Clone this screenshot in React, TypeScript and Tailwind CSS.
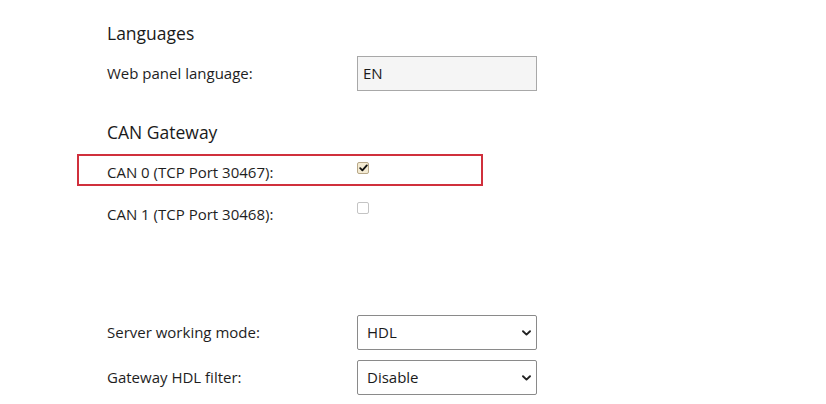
import React from "react";

const font = { fontFamily: '"Open Sans", "Noto Sans", sans-serif' };

function Chevron() {
  return (
    <svg width="9" height="6" viewBox="0 0 9 6" className="absolute right-[5px] top-1/2 -translate-y-1/2">
      <path d="M1 1.2 L4.5 4.6 L8 1.2" fill="none" stroke="#222" strokeWidth="1.9" strokeLinecap="round" strokeLinejoin="round" />
    </svg>
  );
}

function SelectBox({ value }: { value: string }) {
  return (
    <div className="relative w-[180px] h-[35px] border border-[#8a8a8a] rounded-[2px] bg-white flex items-center pl-[9px] text-[15px] text-[#1a1a1a]">
      {value}
      <Chevron />
    </div>
  );
}

function Checkbox({ checked }: { checked: boolean }) {
  return checked ? (
    <span className="block w-[12px] h-[12px] rounded-[2px] border border-[#b8a888] bg-[#f4ebd3] flex items-center justify-center">
      <svg width="9" height="8" viewBox="0 0 9 8">
        <path d="M1.2 4.2 L3.4 6.4 L7.8 1.4" fill="none" stroke="#111" strokeWidth="1.8" strokeLinecap="round" strokeLinejoin="round" />
      </svg>
    </span>
  ) : (
    <span className="block w-[12px] h-[12px] rounded-[2px] border border-[#c4c4c4] bg-white" />
  );
}

export default function App() {
  return (
    <div className="w-[826px] h-[404px] bg-white overflow-hidden text-[#1e1e1e]" style={font}>
      <div className="pl-[107px] pt-[20px] flex flex-col">
        <div className="h-[26px] flex items-center text-[17.5px] font-medium text-[#1a1a1a]">Languages</div>
        <div className="mt-[10px] flex items-center h-[35px]">
          <div className="w-[250px] text-[15px]">Web panel language:</div>
          <div className="w-[180px] h-[35px] border border-[#a8a8a8] bg-[#f5f5f5] flex items-center pl-[5px] text-[15px] text-[#1a1a1a]">EN</div>
        </div>
        <div className="mt-[28px] h-[26px] flex items-center text-[17.5px] font-medium text-[#1a1a1a]">CAN Gateway</div>
        <div className="mt-[9px] -ml-[30px] w-[406px] h-[32px] border-2 border-[#d0303c] flex items-start pl-[28px]">
          <div className="w-[250px] text-[15px] pt-[5px]">CAN 0 (TCP Port 30467):</div>
          <div className="pt-[6px]"><Checkbox checked /></div>
        </div>
        <div className="mt-[16px] flex items-start h-[30px]">
          <div className="w-[250px] text-[15px] pt-[1px]">CAN 1 (TCP Port 30468):</div>
          <div className="pt-[0px]"><Checkbox checked={false} /></div>
        </div>
        <div className="mt-[83px] flex items-center">
          <div className="w-[250px] text-[15px]">Server working mode:</div>
          <SelectBox value="HDL" />
        </div>
        <div className="mt-[10px] flex items-center">
          <div className="w-[250px] text-[15px]">Gateway HDL filter:</div>
          <SelectBox value="Disable" />
        </div>
      </div>
    </div>
  );
}
